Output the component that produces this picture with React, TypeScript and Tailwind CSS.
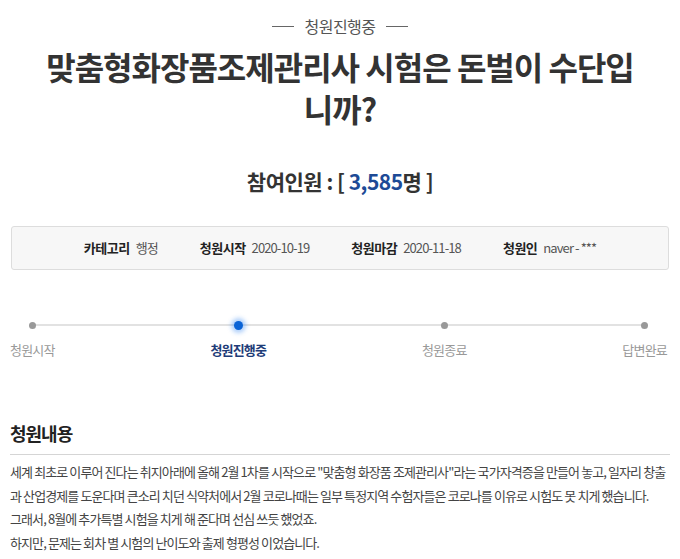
import * as React from "react";

const font = { fontFamily: '"Noto Sans CJK KR", "Noto Sans", sans-serif' };

const steps = [
  { label: "청원시작", active: false },
  { label: "청원진행중", active: true },
  { label: "청원종료", active: false },
  { label: "답변완료", active: false },
];

function InfoItem({ label, value }: { label: string; value: string }) {
  return (
    <div className="flex items-center gap-[6px]">
      <span className="font-bold tracking-[-0.5px] text-[#222]">{label}</span>
      <span className="tracking-[-0.9px] text-[#555]">{value}</span>
    </div>
  );
}

export default function App() {
  return (
    <div className="min-h-[559px] w-[680px] bg-white px-[10px]" style={font}>
      <div className="flex items-center justify-center gap-[10px] pt-[14px] text-[16px] leading-[24px] tracking-[-0.5px] text-[#555]">
        <span className="h-px w-[22px] bg-[#666]" />
        <span>청원진행중</span>
        <span className="h-px w-[22px] bg-[#666]" />
      </div>

      <h1 className="mt-[7px] text-center text-[32px] font-bold leading-[42px] tracking-[-1px] text-[#333]">
        맞춤형화장품조제관리사 시험은 돈벌이 수단입
        <br />
        니까?
      </h1>

      <div className="mt-[38px] text-center text-[21px] font-bold leading-[28px] tracking-[-0.5px] text-[#333]">
        참여인원 : [ <span className="text-[#1d4a96]">3,585</span>명 ]
      </div>

      <div className="mx-px mt-[31px] flex h-[44px] items-center justify-center gap-[42px] rounded-[3px] border border-[#ddd] bg-[#f7f7f7] text-[13px]">
        <InfoItem label="카테고리" value="행정" />
        <InfoItem label="청원시작" value="2020-10-19" />
        <InfoItem label="청원마감" value="2020-11-18" />
        <InfoItem label="청원인" value="naver - ***" />
      </div>

      <div className="relative mt-[48px] pr-[3px]">
        <div className="absolute left-[22px] right-[25px] top-[6px] h-[2px] bg-[#e2e2e2]" />
        <div className="relative flex justify-between">
          {steps.map((s) => (
            <div key={s.label} className="flex flex-col items-center">
              <div className="flex h-[14px] items-center">
                {s.active ? (
                  <span className="h-[9px] w-[9px] rounded-full bg-[#0a63d6] shadow-[0_0_4px_3px_rgba(30,120,240,0.35)]" />
                ) : (
                  <span className="h-[7px] w-[7px] rounded-full bg-[#999]" />
                )}
              </div>
              <span
                className={
                  "mt-[8px] text-[13px] leading-[20px] tracking-[-0.8px] " +
                  (s.active ? "font-bold text-[#1e3c78]" : "text-[#999]")
                }
              >
                {s.label}
              </span>
            </div>
          ))}
        </div>
      </div>

      <h2 className="mt-[60px] text-[18px] font-bold leading-[26px] tracking-[-1px] text-[#222]">
        청원내용
      </h2>
      <div className="mt-[8px] h-px bg-[#d5d5d5]" />

      <div className="mt-[5px] text-[13px] leading-[23.5px] tracking-[-0.9px] text-[#444]">
        <p>
          세계 최초로 이루어 진다는 취지아래에 올해 2월 1차를 시작으로 "맞춤형 화장품 조제관리사"라는 국가자격증을 만들어 놓고, 일자리 창출과 산업경제를 도운다며 큰소리 치던 식약처에서 2월 코로나때는 일부 특정지역 수험자들은 코로나를 이유로 시험도 못 치게 했습니다.
        </p>
        <p>그래서, 8월에 추가특별 시험을 치게 해 준다며 선심 쓰듯 했었죠.</p>
        <p>하지만, 문제는 회차 별 시험의 난이도와 출제 형평성 이었습니다.</p>
      </div>
    </div>
  );
}
